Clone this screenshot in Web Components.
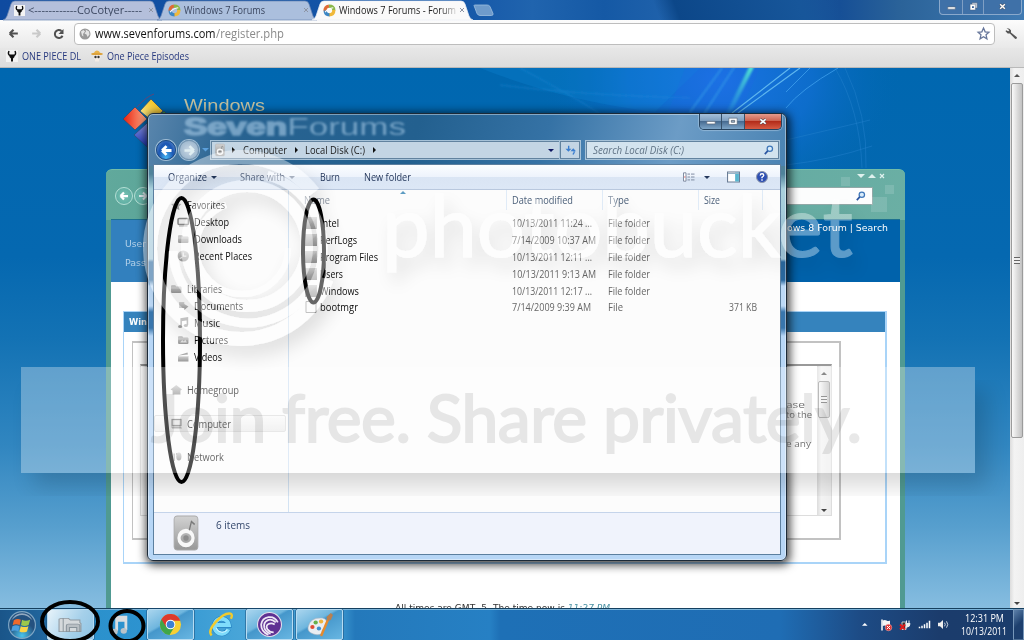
<!DOCTYPE html>
<html lang="en">
<head>
<meta charset="utf-8">
<title>Desktop</title>
<style>
  html, body { margin: 0; height: 100%; overflow: hidden; }
  body { font: 10px/1.2 "Open Sans", "Noto Sans", sans-serif; color: #1b1b1b; }
</style>
</head>
<body>
<desktop-screen></desktop-screen>

<script>
const shadow = (el, html) => {
  const template = document.createElement('template')
  template.innerHTML = html
  el.attachShadow({ mode: 'open' }).appendChild(template.content.cloneNode(true))
}

// simple elements only need a tag name and a piece of markup
const define = (name, html) => {
  customElements.define(name, class extends HTMLElement {
    constructor() {
      super()
      shadow(this, typeof html === 'function' ? html(this) : html)
    }
  })
}

const box = 'box-sizing: border-box;'

/* ---------- icons ---------- */

const arrowL = 'M5 12 L12 5 M5 12 L12 19 M5 12 H20'
const folderPath = '<path d="M2 6q0-2 2-2h6l2 3h8q2 0 2 2v9q0 2-2 2H4q-2 0-2-2z" fill="url(#g)"/><path d="M2 10h20" stroke="#eee"/>'

const icons = {
  back: `<path d="${arrowL}" fill="none" stroke="#505050" stroke-width="4"/>`,
  forward: `<path d="${arrowL}" transform="matrix(-1 0 0 1 24 0)" fill="none" stroke="#c9c9c9" stroke-width="4"/>`,
  reload: '<path d="M19 15.500A8 8 0 1 1 17 6" fill="none" stroke="#505050" stroke-width="4"/><path d="M21 2v10h-10z" fill="#505050"/>',
  backw: `<path d="${arrowL}" fill="none" stroke="#fff" stroke-width="4.500"/>`,
  fwdw: `<path d="${arrowL}" transform="matrix(-1 0 0 1 24 0)" fill="none" stroke="#e0eef2" stroke-width="4"/>`,
  whitex: '<path d="M4 4l16 16M20 4L4 20" stroke="#dff1ee" stroke-width="5"/>',
  globe: '<circle cx="12" cy="12" r="11" fill="#999"/><path d="M4 7l5-3 3 3-4 5 1 5-3-2zM13 3l7 4 1 6-4 5-2-5-4-2 3-4z" fill="#e4e4e4"/>',
  star: '<path d="M12 2l3 7 7 .7-5.300 4.800L18.300 22 12 18l-6.300 4 1.600-7.500L2 9.700 9 9z" fill="#fff" stroke="#65759a" stroke-width="2.400"/>',
  wrench: '<path d="M3 2l5 1 3 3 0 4 11 9q1 3-3 3L9 12H5L1 8l1-2 4 2 2-2z" fill="#555"/>',
  skull: '<rect width="24" height="24" fill="#f4f4f4"/><path d="M6 2q-3 7 2 9M18 2q3 7-2 9" fill="none" stroke="#111" stroke-width="3"/><path d="M7 9h10v5l-3 3v6h-4v-6l-3-3z" fill="#111"/>',
  luffy: '<ellipse cx="12" cy="8" rx="12" ry="3" fill="#dca23c"/><path d="M6 6q1-5 6-5t6 5z" fill="#e8b24a"/><path d="M5 10h14q0 8-3 9v4H8v-4q-3-1-3-9z" fill="#f3ece6"/><circle cx="9" cy="14" r="2.400" fill="#333"/><circle cx="15" cy="14" r="2.400" fill="#333"/>',
  forums: '<g fill="none" stroke-width="6"><path d="M4 13Q3 5 11 4" stroke="#e06a35"/><path d="M11 4q9 0 9 8" stroke="#8bb84a"/><path d="M20 11q0 9-9 9" stroke="#f0b93a"/><path d="M12 20q-8 0-8-8" stroke="#3c87c4"/></g><path d="M4 15q5-7 15-8" stroke="#fff" stroke-width="2" fill="none"/>',
  disk: '<rect x="1" y="0" width="22" height="24" rx="3" ry="2.300" fill="url(#g)" stroke="#aaa" stroke-width=".8"/><ellipse cx="12" cy="15.500" rx="6.500" ry="5" fill="none" stroke="#f8f8f8" stroke-width="3"/><ellipse cx="12" cy="15.500" rx="2.500" ry="2" fill="#8c8c8c"/><path d="M15 10l2-6 3 2" fill="none" stroke="#7a7a7a" stroke-width="1.200"/>',
  favorites: '<path d="M12 3l3 6 7 1-5 5 1 7-6-3-6 3 1-7-5-5 7-1z" fill="url(#g)"/>',
  desktop: '<rect x="2" y="5" width="20" height="12" rx="2" fill="#eee" stroke="#888" stroke-width="3"/><path d="M4 20h16" stroke="#aaa" stroke-width="2"/>',
  folder: folderPath,
  recent: '<circle cx="12" cy="12" r="11" fill="url(#g)"/><path d="M12 5v7h6M5 17l5-2" fill="none" stroke="#eee" stroke-width="2.500"/>',
  documents: '<path d="M4 4h10v4l8 5-8 7v-4H4z" fill="url(#g)"/>',
  music: '<path d="M8 18V4l12-2v14M8 7l12-2" fill="none" stroke="#999" stroke-width="3"/><ellipse cx="6" cy="19" rx="4" ry="3" fill="#a0a0a0"/><ellipse cx="17" cy="17" rx="4" ry="3" fill="#a0a0a0"/>',
  pictures: folderPath + '<path d="M6 17l4-5 3 3 3-4 3 6z" fill="#e2e2e2"/>',
  videos: '<path d="M2 10h20v11H2z" fill="url(#g)"/><path d="M2 9L20 3l1 4z" fill="#aaa"/><path d="M3 11h18" stroke="#eee"/>',
  home: '<path d="M12 2l11 9-3 2v8H5v-8l-4-2z" fill="url(#g)"/>',
  computer: '<rect x="4" y="3" width="17" height="12" fill="#e4e4e4" stroke="#808080" stroke-width="2.500"/><path d="M2 17h19l2 4H4z" fill="#999"/>',
  network: '<path d="M8 5v15M13 4v4" stroke="#bbb" stroke-width="3"/><ellipse cx="17" cy="11" rx="5" ry="8" fill="url(#g)"/>',
  block: '<rect x="0" y="0" width="24" height="24" fill="url(#g)"/><path d="M2 22L22 4v20z" fill="#9a9a9a" opacity=".25"/>',
  file: '<path d="M2 1h20v22H2z" fill="#fafafa" stroke="#999" stroke-width="2"/>',
  search: '<circle cx="14" cy="9" r="6.500" fill="#d8ecfb" stroke="#3e76b8" stroke-width="3"/><path d="M9 14L2 22" stroke="#2b55a0" stroke-width="4"/>',
  refresh: '<path d="M8 2v9" stroke="#3c7fd0" stroke-width="3"/><path d="M1 9h13l-6.500 7z" fill="#3c7fd0"/><path d="M17 23q4-3 3-8" fill="none" stroke="#3c7fd0" stroke-width="3"/><path d="M12 15l6-7 6 7z" fill="#3c7fd0"/>',
  view: '<g stroke="#77839a" stroke-width="2"><path d="M9 5h5M16 5h7M9 12h5M16 12h7M9 19h5M16 19h7"/><path d="M1 2h5v20H1z" fill="#fff"/></g><path d="M2 12h3" stroke="#d66" stroke-width="2"/>',
  pane: '<rect x="1" y="2" width="22" height="20" fill="#fff" stroke="#6b7d95" stroke-width="2"/><path d="M15 3h7v18h-7z" fill="#58b5cf"/><path d="M2 5h20" stroke="#98b4c8" stroke-width="2"/>',
  help: '<circle cx="12" cy="12" r="11" fill="#2d4fb3" stroke="#8e98ac" stroke-width="2"/><path d="M8.500 9q0-3.500 3.500-3.500t3.500 3q0 2-3.500 4v2M12 16.500v3" fill="none" stroke="#fff" stroke-width="2.800"/>',
  min: '<path d="M2 13h20v6H2z" fill="#fff" stroke="#5a6474" stroke-width="1.500"/>',
  max: '<path d="M2 3h20v17H2z" fill="#fff" stroke="#536070" stroke-width="1.500"/><path d="M8 9h8v5H8z" fill="#9db4cb" stroke="#536070" stroke-width="2"/>',
  restore: '<path d="M8 2h14v14H8z" fill="#c8d2e0" stroke="#44506a"/><path d="M3 6h14v15H3z" fill="#fff" stroke="#44506a"/><path d="M8 11h5v5H8z" fill="#355e98"/>',
  close: '<path d="M4 4l16 16M20 4L4 20" stroke="#49505c" stroke-width="8"/><path d="M4 4l16 16M20 4L4 20" stroke="#fff" stroke-width="5"/>',
  tabclose: '<path d="M4 4l16 16M20 4L4 20" stroke="#8d94a3" stroke-width="4"/>',
  orb: '<circle cx="12" cy="12" r="11.500" fill="url(#o)" stroke="#7fa6c4"/><path d="M5 8q3-2 6-.5l-1 4.500q-3-1.500-6 0z" fill="#ee6a2c"/><path d="M12 7.500q3 1.500 7 0l-1.300 4.500q-3.500 1.500-6.500 0z" fill="#9cc84b"/><path d="M3.800 13q3-1.500 6 0l-1 4.500q-3-1.500-6 0z" fill="#4b9fe0"/><path d="M11 13q3 1.500 6.500 0l-1.200 4.500q-3.500 1.500-6.500 0z" fill="#fbd347"/><path d="M3 8q9-9 18 0-3-6-9-6T3 8z" fill="#fff" opacity=".5"/>',
  folders: '<path d="M1 5q3-2 4 0v15H1zM5 4h5l2 2h9v3l1 1v10H5z" fill="#d5d9dc" stroke="#8e989f"/><path d="M8 20v-7q0-2 2-2h9q2 0 2 2v7h-3v-5h-7v5z" fill="#b9bfc4" stroke="#87929a"/>',
  tasknote: '<path d="M8 19V3h13v15M8 6h13" fill="none" stroke="#d9dde0" stroke-width="4"/><ellipse cx="5" cy="20" rx="4.500" ry="3.500" fill="#b9c3ca"/><ellipse cx="18" cy="19" rx="4.500" ry="3.500" fill="#b9c3ca"/>',
  chrome: '<circle cx="12" cy="12" r="11" fill="#f7cf34"/><path d="M2.500 6.500A11 11 0 0 0 11 23l5-8.500L12 12z" fill="#3fa648"/><path d="M2.500 6.500L7.500 14.500 12 8h10.300A11 11 0 0 0 2.500 6.500z" fill="#dd3a2c"/><circle cx="12" cy="12" r="5" fill="#fff"/><circle cx="12" cy="12" r="4" fill="#3c7fd2"/>',
  ie: '<g fill="none"><path d="M19.500 16.500A7 7.200 0 1 1 20 12.500H8" stroke="#2583c4" stroke-width="5"/><path d="M19.500 16.500A7 7.200 0 1 1 20 12.500H8" stroke="#7fdcfb" stroke-width="3.800"/><path d="M18.500 17A6 6 0 0 1 8 15" stroke="#d4f5ff" stroke-width="1"/><path d="M3.500 22.500q-4-4 4-13t14-8q2.500 1 .5 5" stroke="#f2cb2d" stroke-width="2.300"/></g>',
  torrent: '<circle cx="12" cy="12" r="11.500" fill="#5f3193" stroke="#e6e2ee"/><g fill="none" stroke="#efe8f6" stroke-width="1.700"><path d="M20 10Q17 4 11 5T4 12q0 7 7 10"/><path d="M18 10q-4-4-8-2t-3 7q1 4 6 6"/><path d="M17 12q-3-2-6-.5t-1 5q2 3 6 3"/></g>',
  paint: '<path d="M1 14Q3 4 14 5q5 1 4 6t-3 5q-2 2-1 4-3 3-8 1-6-2-5-7z" fill="#e9edf2" stroke="#aab3bf" stroke-width=".6"/><circle cx="5" cy="14" r="2" fill="#df4b35"/><circle cx="8" cy="9.500" r="2" fill="#67b04b"/><circle cx="13" cy="8.500" r="2" fill="#eeb33a"/><circle cx="11" cy="15.500" r="2" fill="#3f8fce"/><path d="M20 5l-7 18" stroke="#e58a2c" stroke-width="2.200"/><path d="M18 4l4-4 2 2-2 5-3 1z" fill="#b98050"/>',
  flag: '<path d="M4 1v22" stroke="#fff" stroke-width="3"/><path d="M5 3q5-2 8 0t7 0v11q-4 2-7 0t-8 0z" fill="#f5f5f5"/><circle cx="17" cy="17" r="6.500" fill="#d33" stroke="#fbb"/><path d="M14 14l6 6M20 14l-6 6" stroke="#fff" stroke-width="2"/>',
  power: '<path d="M6 6h8v15H6z" fill="#333" stroke="#eee" stroke-width="1.500"/><path d="M13 9h9q0 7-6 7-2 0-3 4M15 9V3M20 9V3" fill="#eee" stroke="#eee" stroke-width="2"/><path d="M2 11l10 10M12 11L2 21" stroke="#e01b1b" stroke-width="4"/>',
  signal: '<path d="M3 18v4M8 15v7M13 11v11M18 7v15M23 2v20" stroke="#fff" stroke-width="3"/>',
  speaker: '<path d="M2 8h4l6-6v20l-6-6H2z" fill="#eee"/><path d="M15 8q3 4 0 8M19 5q5 7 0 14" fill="none" stroke="#e5eaf0" stroke-width="1.800"/>'
}

class GlyphIcon extends HTMLElement {
  constructor() {
    super()
    const w = this.getAttribute('w') || 12
    const h = this.getAttribute('h') || w
    shadow(this, `
      <style>
        :host { display: inline-block; flex: none; width: ${w}px; height: ${h}px; }
        svg { display: block; overflow: visible; }
      </style>
      <svg width="${w}" height="${h}" viewBox="0 0 24 24" preserveAspectRatio="none">
        <defs>
          <linearGradient id="g" x2="0" y2="1"><stop stop-color="#d2d2d2"/><stop offset="1" stop-color="#989898"/></linearGradient>
          <radialGradient id="o" cy=".9"><stop stop-color="#49c4ec"/><stop offset="1" stop-color="#24517f"/></radialGradient>
        </defs>
        ${icons[this.getAttribute('name')]}
      </svg>
    `)
  }
}
customElements.define('glyph-icon', GlyphIcon)

// small triangle, direction and size by attribute
define('tri-mark', el => {
  const s = +(el.getAttribute('s') || 3)
  const c = el.getAttribute('c') || '#111'
  const pts = {
    down: `0,0 ${s * 2},0 ${s},${s}`,
    up: `0,${s} ${s * 2},${s} ${s},0`,
    right: `0,0 ${s},${s} 0,${s * 2}`
  }[el.getAttribute('dir') || 'down']
  const right = el.getAttribute('dir') === 'right'
  const w = right ? s : s * 2
  const h = right ? s * 2 : s
  return `<style>:host { display: block; flex: none; width: ${w}px; height: ${h}px; } svg { display: block; }</style>
    <svg width="${w}" height="${h}"><polygon points="${pts}" fill="${c}"/></svg>`
})

/* ---------- browser ---------- */

define('browser-tab', el => {
  const w = +el.getAttribute('w')
  const active = el.hasAttribute('active')
  return `
  <style>
    :host { display: block; position: relative; flex: none; width: ${w}px; height: 20px; margin-right: -${active ? 0 : 5}px; ${active ? 'z-index: 1;' : ''} }
    svg { display: block; position: absolute; inset: 0; overflow: visible; }
    .row { ${box} position: relative; display: flex; align-items: center; height: 20px; padding: 0 8px 0 11px; color: ${active ? '#222' : '#3b4760'}; }
    .text { flex: 1; overflow: hidden; padding-left: 3px; white-space: nowrap; }
    :host([fade]) .text { -webkit-mask-image: linear-gradient(90deg, #000 85%, transparent); }
  </style>
  <svg width="${w}" height="20"><path d="M0 20Q3 19 4 16L8 4Q9 1 12 1H${w - 12}Q${w - 9} 1 ${w - 8} 4L${w - 4} 16Q${w - 3} 19 ${w} 20z"
    fill="${active ? '#fafafa' : (el.getAttribute('tint') || '#abbfdd')}" stroke="${active ? '#e9eef5' : '#6b87b3'}" stroke-width=".7"/></svg>
  <div class="row"><slot name="icon"></slot><div class="text"><slot></slot></div><glyph-icon name="tabclose" w="6"></glyph-icon></div>`
})

define('browser-tabs', `
  <style>
    :host { ${box} display: flex; height: 20px; padding-left: 3px; border-bottom: 0;
      background: linear-gradient(70deg, transparent 64%, #0c4789 66%, #17569a 78%, transparent 82%), linear-gradient(90deg, #0f4ba0, #1557a8 45%, #2064ae 52%, #1559a5 59%, #2163ac 66%, #164f96 82%, #2b6399 88%, #417bb3); }
    .new { width: 21px; height: 14px; margin: 4px 0 0 0; }
    .wins { ${box} display: flex; margin: 0 2px 5px auto; border: 1px solid #8aa9cc; border-top: 0; border-radius: 0 0 4px 4px; background: #3f71a8; overflow: hidden; height: 15px; }
    .wins div { ${box} display: grid; place-items: center; width: 23px; padding-bottom: 1px; border-right: 1px solid #7f9fc4; }
    .wins div:nth-child(2) { width: 21px; }
    .wins div:last-child { width: 37px; border: 0; }
  </style>
  <browser-tab w="159" tint="#b4bfdb"><glyph-icon slot="icon" name="skull" w="11"></glyph-icon><fit-text w="114">&lt;------------CoCotyer-----</fit-text></browser-tab>
  <browser-tab w="160"><glyph-icon slot="icon" name="forums" w="13"></glyph-icon><fit-text w="81">Windows 7 Forums</fit-text></browser-tab>
  <browser-tab w="161" active fade><glyph-icon slot="icon" name="forums" w="13"></glyph-icon><fit-text w="117">Windows 7 Forums - Forum</fit-text></browser-tab>
  <svg class="new"><path d="M1 1.500q0-.5 1-.5h12q2 0 3 1.500l3 7q.5 2-1.500 2H7q-2 0-3-2z" fill="#6f9bcb" stroke="#a0bfde" stroke-width=".8"/></svg>
  <div class="wins"><div><glyph-icon name="min" w="9"></glyph-icon></div><div><glyph-icon name="restore" w="9"></glyph-icon></div><div><glyph-icon name="close" w="7"></glyph-icon></div></div>
`)

define('browser-toolbar', `
  <style>
    :host { ${box} display: flex; align-items: center; gap: 10px; height: 28px; padding: 0 6px 1px 7px; background: linear-gradient(#fcfcfc, #e9e9e9); }
    .url { ${box} flex: 1; display: flex; align-items: center; height: 22px; margin-left: -1px; padding: 0 4px; border: 1px solid #bdbdbd; border-radius: 4px; background: #fff; font-size: 13px; color: #111; }
    .url glyph-icon:first-child { margin-right: 4px; }
    .path { color: #8a8a8a; flex: 1; }
  </style>
  <glyph-icon name="back" w="13"></glyph-icon>
  <glyph-icon name="forward" w="13"></glyph-icon>
  <glyph-icon name="reload" w="12"></glyph-icon>
  <div class="url">
    <glyph-icon name="globe" w="12"></glyph-icon><fit-text w="120.500">www.sevenforums.com</fit-text><span class="path"><fit-text w="68">/register.php</fit-text></span>
    <glyph-icon name="star" w="13"></glyph-icon>
  </div>
  <glyph-icon name="wrench" w="13"></glyph-icon>
`)

define('bookmarks-bar', `
  <style>
    :host { ${box} display: flex; align-items: center; height: 20px; padding: 0 6px 4px; border-bottom: 1px solid #b9b9b9; background: linear-gradient(#e7e7e7, #dcdcdc); color: #26387e; }
    glyph-icon { margin-right: 4px; }
    fit-text { margin-right: 10px; }
  </style>
  <glyph-icon name="skull" w="12"></glyph-icon><fit-text w="59">ONE PIECE DL</fit-text>
  <glyph-icon name="luffy" w="12"></glyph-icon><fit-text w="82">One Piece Episodes</fit-text>
`)

define('scroll-bar', el => `
  <style>
    :host { ${box} display: flex; flex-direction: column; align-items: center; flex: none; width: 14px; padding: 6px 0 3px; background: linear-gradient(90deg, #dcdcdc, #f3f3f3 30%, #eee); }
    .thumb { ${box} display: grid; place-items: center; width: 12px; height: ${el.getAttribute('thumb')}px; margin: 6px 0 auto; border: 1px solid #9b9b9b; border-radius: 2px; background: linear-gradient(90deg, #fafafa, #dadada 55%, #c2c2c2); }
    .grip { width: 6px; height: 7px; background: repeating-linear-gradient(#666 0 1px, #eee 1px 3px); }
  </style>
  <tri-mark dir="up" s="3" c="#555"></tri-mark>
  <div class="thumb"><div class="grip"></div></div>
  <tri-mark s="3" c="#444"></tri-mark>
`)

/* ---------- forum page ---------- */

define('page-backdrop', `
  <style>:host { display: block; position: absolute; inset: 0; } svg { display: block; }</style>
  <svg width="1010" height="540" viewBox="0 68 1010 540">
    <defs>
      <linearGradient id="sky" x2="0" y2="1"><stop stop-color="#0067b0"/><stop offset=".35" stop-color="#0568b0"/><stop offset=".5" stop-color="#1372b4"/><stop offset=".7" stop-color="#3186c0"/><stop offset=".85" stop-color="#579fce"/><stop offset="1" stop-color="#86bde0"/></linearGradient>
      <radialGradient id="glow"><stop stop-color="#1b73e4"/><stop offset=".5" stop-color="#0f6ed0" stop-opacity=".85"/><stop offset="1" stop-color="#0067b0" stop-opacity="0"/></radialGradient>
      <linearGradient id="ray" x1="1" x2="0" y2="1"><stop stop-color="#54e8d2"/><stop offset="1" stop-color="#2d9ce0" stop-opacity=".3"/></linearGradient>
      <filter id="soft"><feGaussianBlur stdDeviation="1"/></filter>
    </defs>
    <rect y="68" width="1010" height="540" fill="url(#sky)"/>
    <ellipse cx="720" cy="80" rx="185" ry="140" fill="url(#glow)"/>
    <path d="M480 68Q560 100 655 112L700 68z" fill="#0e8adb" opacity=".25"/>
    <path d="M685 68L668 112H740L760 68z" fill="#2263e4" opacity=".2"/>
    <g filter="url(#soft)" fill="none">
      <path d="M752 66L728 114" stroke="url(#ray)" stroke-width="4.500"/>
      <path d="M735 66L704 114M722 68L690 112" stroke="#2f91e6" stroke-width="1.500"/>
      <path d="M520 68Q580 100 600 114M500 85Q580 95 690 98" stroke="#2791e0" opacity=".5"/>
    </g>
    <g fill="none">
      <path d="M790 68L732 113M800 68L738 113" stroke="#5eb6ef" stroke-width="1.200"/>
      <path d="M810 68L786 92M838 68Q800 90 786 108" stroke="#3fa0ec" stroke-width=".8"/>
      <path d="M835 68Q860 110 862 168M845 68Q868 115 866 168M786 140Q850 125 870 120M786 165Q830 160 872 146" stroke="#2180cc" stroke-width="1" opacity=".5"/>
    </g>
    <defs>
      <linearGradient id="yl" x1="1" x2="0" y2="1"><stop stop-color="#f2b800"/><stop offset="1" stop-color="#fff0a0"/></linearGradient>
      <linearGradient id="rd"><stop stop-color="#e8200e"/><stop offset="1" stop-color="#ffb08a"/></linearGradient>
      <linearGradient id="bl" x2="0" y2="1"><stop stop-color="#8d95e0"/><stop offset="1" stop-color="#1c35b8"/></linearGradient>
    </defs>
    <g transform="translate(151 111)" stroke="#2b4e78" stroke-width=".8">
      <path d="M0-12L12 0 1 10-11 0z" fill="url(#yl)"/><path d="M-16-4L-4 8-16 19-28 8z" fill="url(#rd)"/><path d="M-4 12L8 24-4 36-17 24z" fill="url(#bl)"/><path d="M1 10L13 0 24 11 12 22z" fill="#3f9c49"/>
      <path d="M-14-4Q-4-15 3-17" fill="none" stroke="#733f6a"/>
    </g>
  </svg>
`)

define('forum-terms', `
  <style>
    :host { ${box} display: flex; justify-content: flex-end; height: 199px; margin: 9px 44px 0 8px; padding: 21px 7px 22px; border: 2px solid #c2c2c2; border-left-width: 1px; }
    .scroll { ${box} display: flex; width: 100%; border: 1px solid #ddd; border-top: 2px solid #999; }
    .lines { flex: 1; display: flex; flex-direction: column; align-items: flex-start; padding: 34px 0 0 645px; font-size: 9.500px; line-height: 10px; color: #333; }
    .lines :last-child { margin-top: 19px; }
  </style>
  <div class="scroll">
    <div class="lines"><fit-text w="19">ase</fit-text><fit-text w="26">to the</fit-text><fit-text w="25">e any</fit-text></div>
    <scroll-bar thumb="37"></scroll-bar>
  </div>
`)

define('forum-frame', `
  <style>
    :host { ${box} display: flex; flex-direction: column; width: 799px; height: 440px; padding: 0 5px; border-radius: 6px 6px 0 0; background: linear-gradient(115deg, #61a99c, #56a195 20%, #62aaa2 70%, #6bafa4) 0 0 / 100% 50px no-repeat, #509a92; border-top: 1px solid #72bda9; }
    .head { ${box} display: flex; justify-content: space-between; height: 49px; padding: 1px 27px 0 4px; }
    .nav { display: flex; align-self: center; gap: 1px; padding-top: 1px; }
    .nav div { ${box} display: grid; place-items: center; width: 18px; height: 18px; border: 1px solid #b6e0d6; border-radius: 50%; background: radial-gradient(#7ac3b5, #56a79c); }
    .tools { display: flex; flex-direction: column; align-items: flex-end; }
    .marks { display: flex; align-items: center; gap: 3px; height: 9px; margin-right: -12px; color: #dff1ee; }
    .find { ${box} display: flex; justify-content: flex-end; align-items: center; width: 92px; height: 18px; margin-top: 7px; padding-right: 6px; background: #fcfdfd; border: 1px solid #91a8a7; }
    .login { ${box} display: flex; justify-content: space-between; height: 63px; padding: 3px 12px 0 14px; border-top: 1px solid #1d7190; background: linear-gradient(90deg, #3280be, #3280be 5%, #0062ab 20%); color: #b3d0e9; }
    .fields { display: flex; flex-direction: column; gap: 8px; padding-top: 16px; font-family: "DejaVu Sans", sans-serif; font-size: 9px; }
    .links { color: #fff; font-family: "DejaVu Sans", sans-serif; font-size: 9px; }
    .main { flex: 1; display: flex; flex-direction: column; padding: 29px 13px 0 12px; background: #fff; overflow: hidden; }
    .panel { ${box} flex: none; height: 253px; border: 1px solid #a9d4f8; border-width: 1px 2px 2px 1px; }
    .title { ${box} display: flex; align-items: center; height: 20px; padding-left: 5px; background: #3583bd; color: #fff; font-family: "DejaVu Sans", sans-serif; font-weight: bold; font-size: 9px; }
    .time { flex: none; text-align: center; margin: 39px 0 0 -3px; font: 9px/11px "DejaVu Sans", sans-serif; color: #333; white-space: nowrap; }
    .time i { color: #4d93a5; }
  </style>
  <div class="head">
    <div class="nav"><div><glyph-icon name="backw" w="12"></glyph-icon></div><div><glyph-icon name="fwdw" w="12"></glyph-icon></div></div>
    <div class="tools">
      <div class="marks"><tri-mark s="4" c="#dff1ee"></tri-mark><tri-mark dir="up" s="4" c="#dff1ee"></tri-mark><glyph-icon name="whitex" w="6"></glyph-icon></div>
      <div class="find"><glyph-icon name="search" w="10"></glyph-icon></div>
    </div>
  </div>
  <div class="login">
    <div class="fields"><fit-text w="21">User</fit-text><fit-text w="21">Pass</fit-text></div>
    <div class="links"><fit-text w="101">ows 8 Forum | Search</fit-text></div>
  </div>
  <div class="main">
    <div class="panel"><div class="title"><fit-text w="18">Win</fit-text></div><forum-terms></forum-terms></div>
    <div class="time"><fit-text w="218">All times are GMT -5. The time now is <i>11:27 PM</i>.</fit-text></div>
  </div>
`)

define('forum-page', `
  <style>
    :host { display: flex; height: 540px; overflow: hidden; }
    .view { position: relative; flex: 1; overflow: hidden; }
    .content { position: relative; display: flex; flex-direction: column; padding-left: 106px; }
    .brand { ${box} height: 101px; padding: 28px 0 0 78px; color: #c0bf9f; font: 17px/20px "Liberation Sans", Arial, sans-serif; }
  </style>
  <div class="view">
    <page-backdrop></page-backdrop>
    <div class="content">
      <div class="brand"><fit-text w="81">Windows</fit-text></div>
      <forum-frame></forum-frame>
    </div>
  </div>
  <scroll-bar thumb="355"></scroll-bar>
`)

/* ---------- explorer ---------- */

define('window-buttons', `
  <style>
    :host { ${box} display: flex; width: 83px; height: 16px; border: 1px solid #26435f; border-top: 0; border-radius: 0 0 5px 5px; overflow: hidden; box-shadow: 0 0 1px 1px #b8d3e980; }
    div { ${box} display: grid; place-items: center; width: 23px; padding-bottom: 1px; border-right: 1px solid #35506a; background: linear-gradient(#a4bfda, #7e9fc0 45%, #45698f 48%, #7da5c8); }
    div:nth-child(2) { width: 22px; }
    div:last-child { flex: 1; border: 0; background: linear-gradient(#e49a8c, #cc6351 45%, #b22a18 48%, #d65b43); }
  </style>
  <div><glyph-icon name="min" w="10"></glyph-icon></div><div><glyph-icon name="max" w="10" h="9"></glyph-icon></div><div><glyph-icon name="close" w="8" h="7"></glyph-icon></div>
`)

define('address-bar', `
  <style>
    :host { display: flex; align-items: center; height: 18px; padding: 0 2px 0 3px; }
    .nav { display: flex; align-items: center; }
    .ball { ${box} display: grid; place-items: center; width: 20px; height: 20px; border: 1px solid #1b4a86; border-radius: 50%; background: radial-gradient(at 50% 100%, #46b7f5, #1c56b2 60%, #6d9ad3); box-shadow: 0 0 0 1px #9fbcd4; }
    .off { margin-left: 3px; border-color: #7b99b3; background: radial-gradient(#c9d7e4, #8fadc7); }
    .box { ${box} display: flex; align-items: center; height: 18px; border: 1px solid #62839f; background: #c3d5e4; box-shadow: 0 0 0 1px #a6c2d8; }
    .crumbs { width: 350px; margin-left: 2px; padding-left: 3px; }
    .crumbs > * { flex: none; }
    .go { width: 20px; justify-content: center; }
    .find { width: 193px; margin-left: 6px; padding: 0 4px 0 6px; justify-content: space-between; background: #d3e3ee; color: #5f7284; font-style: italic; }
  </style>
  <div class="nav"><div class="ball"><glyph-icon name="backw" w="15"></glyph-icon></div><div class="ball off"><glyph-icon name="fwdw" w="15"></glyph-icon></div>
  <tri-mark s="3.500" c="#5ba0dc" style="margin: 0 0 0 3px"></tri-mark></div>
  <div class="box crumbs">
    <glyph-icon name="disk" w="10" h="12"></glyph-icon>
    <tri-mark dir="right" style="margin: 0 8px 0 7px"></tri-mark><fit-text w="44">Computer</fit-text>
    <tri-mark dir="right" style="margin: 0 7px 0 8px"></tri-mark><fit-text w="60">Local Disk (C:)</fit-text>
    <tri-mark dir="right" style="margin: 0 auto 0 8px"></tri-mark><tri-mark c="#0d1560" style="margin-right: 5px"></tri-mark>
  </div>
  <div class="box go"><glyph-icon name="refresh" w="11" h="10"></glyph-icon></div>
  <div class="box find"><fit-text w="91">Search Local Disk (C:)</fit-text><glyph-icon name="search" w="10"></glyph-icon></div>
`)

define('command-bar', `
  <style>
    :host { ${box} display: flex; align-items: center; height: 25px; padding: 0 12px 0 14px; border-bottom: 1px solid #b9c8de; background: linear-gradient(#fbfdff, #edf3fc 50%, #dae5f4 52%, #dce7f6); color: #25385c; }
    tri-mark { margin-left: 4px; }
    .dim { color: #5c6b86; }
  </style>
  <fit-text w="39">Organize</fit-text><tri-mark c="#25385c"></tri-mark>
  <fit-text class="dim" w="45" style="margin-left: 23px">Share with</fit-text><tri-mark c="#6f7d96"></tri-mark>
  <fit-text w="20" style="margin-left: 25px">Burn</fit-text>
  <fit-text w="47" style="margin: 0 auto 0 24px">New folder</fit-text>
  <glyph-icon name="view" w="12" h="10"></glyph-icon><tri-mark c="#25385c" style="margin: 0 17px 0 9px"></tri-mark>
  <glyph-icon name="pane" w="13" h="12"></glyph-icon><glyph-icon name="help" w="12" style="margin-left: 16px"></glyph-icon>
`)

define('tree-item', el => `
  <style>
    :host { ${box} display: flex; align-items: center; height: 16.800px; padding-left: 16px; color: #222; }
    :host([sub]) { padding-left: 23px; color: #0c0c0c; }
    :host([sub]) glyph-icon { margin-right: 4.500px; }
    :host([gap]) { margin-top: 16.800px; }
    :host([selected]) { margin-right: 2px; border: 1px solid #dedede; border-radius: 2px; padding-left: 15px; background: linear-gradient(#fafafa, #ececec); }
    glyph-icon { margin-right: 4px; }
  </style>
  <glyph-icon name="${el.getAttribute('icon')}" w="12.500" h="12"></glyph-icon><slot></slot>
`)

define('nav-tree', `
  <style>:host { ${box} display: block; flex: none; width: 135px; padding-top: 7px; border-right: 1px solid #d3e3f3; }</style>
  <tree-item icon="favorites"><fit-text w="38">Favorites</fit-text></tree-item>
  <tree-item sub icon="desktop"><fit-text w="35">Desktop</fit-text></tree-item>
  <tree-item sub icon="folder"><fit-text w="48">Downloads</fit-text></tree-item>
  <tree-item sub icon="recent"><fit-text w="58">Recent Places</fit-text></tree-item>
  <tree-item gap icon="folder"><fit-text w="35">Libraries</fit-text></tree-item>
  <tree-item sub icon="documents"><fit-text w="49">Documents</fit-text></tree-item>
  <tree-item sub icon="music"><fit-text w="26">Music</fit-text></tree-item>
  <tree-item sub icon="pictures"><fit-text w="34">Pictures</fit-text></tree-item>
  <tree-item sub icon="videos"><fit-text w="28">Videos</fit-text></tree-item>
  <tree-item gap icon="home"><fit-text w="52">Homegroup</fit-text></tree-item>
  <tree-item gap selected icon="computer"><fit-text w="44">Computer</fit-text></tree-item>
  <tree-item gap icon="network"><fit-text w="37">Network</fit-text></tree-item>
`)

const files = [
  ['Intel', 19, '10/13/2011 11:24 ...', 80, 'File folder', 42],
  ['PerfLogs', 37, '7/14/2009 10:37 AM', 84, 'File folder', 42],
  ['Program Files', 58, '10/13/2011 12:11 ...', 80, 'File folder', 42],
  ['Users', 23, '10/13/2011 9:13 AM', 84, 'File folder', 42],
  ['Windows', 39, '10/13/2011 12:17 ...', 80, 'File folder', 42],
  ['bootmgr', 38, '7/14/2009 9:39 AM', 79, 'File', 15, '371 KB']
]

define('file-list', () => `
  <style>
    :host { display: block; flex: 1; }
    .row { display: grid; grid-template-columns: 218px 96px 96px 64px; align-items: center; height: 16.800px; color: #666; }
    .head { height: 20px; margin-bottom: 5px; color: #4c607a; }
    .head > div { ${box} height: 100%; padding: 4px 0 0 5px; border-right: 1px solid #e0ebf7; }
    .head > div:first-child { padding-left: 15px; color: #8a93a0; display: flex; align-items: start; }
    .head tri-mark { margin: -3px 0 0 70px; }
    .name { display: flex; align-items: center; gap: 3px; padding-left: 16px; color: #0c0c0c; }
    .cell { padding-left: 4.500px; }
    .size { text-align: right; padding-right: 6px; }
  </style>
  <div class="row head"><div><fit-text w="26">Name</fit-text><tri-mark dir="up" c="#5d9cc2"></tri-mark></div><div><fit-text w="61">Date modified</fit-text></div><div><fit-text w="21">Type</fit-text></div><div><fit-text w="16">Size</fit-text></div></div>
  ${files.map(([name, nw, date, dw, type, tw, size]) => `
    <div class="row">
      <div class="name"><glyph-icon name="${size ? 'file' : 'block'}" w="12"></glyph-icon><fit-text w="${nw}">${name}</fit-text></div>
      <div class="cell"><fit-text w="${dw}">${date}</fit-text></div>
      <div class="cell"><fit-text w="${tw}">${type}</fit-text></div>
      <div class="size">${size ? `<fit-text w="28">${size}</fit-text>` : ''}</div>
    </div>`).join('')}
`)

define('explorer-window', `
  <style>
    :host { ${box} display: flex; flex-direction: column; width: 640px; height: 448px; padding: 0 5px 5px; border: 1px solid #1c2a38; border-radius: 6px; overflow: hidden; box-shadow: inset 0 0 0 1px #ffffff66;
      background: linear-gradient(105deg, #5a86ad, #286391 14%, #23608f 42%, #3572a5 62%, #6c9cc6 82%, #4a83b3) 0 0 / 100% 52px no-repeat,
        linear-gradient(#4f829a 60px, #a9d0dc 75px, #9ec4d8 145px, #2a689e 148px, #2a689e 166px, #bcd9f6 172px, #bcd9f6 192px, #3976ad 198px, #3976ad 214px, #b7d6f6 222px);
      }
    .caption { display: flex; justify-content: space-between; height: 27px; }
    .caption window-buttons { margin-right: -1px; }
    .ghost { padding: 1px 0 0 31px; font: 23px/25px "Liberation Sans", Arial, sans-serif; color: #a8cbe6; filter: blur(1.300px); opacity: .6; }
    .ghost b { -webkit-text-stroke: 1.500px #a8cbe6; }
    .body { flex: 1; display: flex; flex-direction: column; margin-top: 5px; border: 1px solid #5c7f9f; background: #fcfcfc; }
    .split { flex: 1; display: flex; }
    .status { ${box} display: flex; align-items: flex-start; height: 42px; padding: 3px 19px; border-top: 1px solid #c5d4ea; background: #f0f3fc; color: #33476b; }
    .status fit-text { margin: 3px 0 0 17px; }
  </style>
  <div class="caption"><div class="ghost"><fit-text w="222"><b>Seven</b>Forums</fit-text></div><window-buttons></window-buttons></div>
  <address-bar></address-bar>
  <div class="body">
    <command-bar></command-bar>
    <div class="split"><nav-tree></nav-tree><file-list></file-list></div>
    <div class="status"><glyph-icon name="disk" w="26" h="34"></glyph-icon><fit-text w="34">6 items</fit-text></div>
  </div>
`)

/* ---------- taskbar ---------- */

define('task-button', el => `
  <style>
    :host { ${box} display: grid; place-items: center; flex: none; width: ${el.getAttribute('w')}px; height: 31px; }
    :host([open]) { border: 1px solid #b7dcf2; border-radius: 2px; background: linear-gradient(150deg, #a9d5ee, #6fb6de 40%, #4597cb 45%, #68b6e2); box-shadow: 0 0 0 .5px #1a4d78; }
    :host([lit]) { background: linear-gradient(120deg, #e7f3fa, #a5d0ea 60%, #8fc4e4); }
  </style><slot></slot>`)

define('task-bar', `
  <style>
    :host { ${box} display: flex; align-items: center; height: 32px; border-top: 1px solid #15405f; box-shadow: inset 0 1px #7ab4da;
      background: linear-gradient(90deg, #1a5589, #20649b 40px, #2b91cc 95px, #2d93d0 145px, #48a5d8 240px, #3b97d0 340px, #2479bb 355px, #2680c4 490px, #1e70b6 500px, #1f6db4 780px, #1d4b85 860px, #1b3c6c 940px, #1b3d6c); }
    task-button { margin-right: 3px; }
    .tray { display: flex; align-items: center; gap: 7px; margin-left: auto; }
    .clock { display: flex; flex-direction: column; align-items: center; gap: 1px; line-height: 12px; color: #fff; margin: 0 -2px 0 5px; }
    .peek { ${box} width: 11px; height: 31px; margin-left: 1px; border: 1px solid #7797b9; border-bottom-color: #4b6c92; background: linear-gradient(135deg, #5d81aa, #1d3f6e 50%); }
  </style>
  <task-button w="44" style="margin-right: 3px"><glyph-icon name="orb" w="28"></glyph-icon></task-button>
  <task-button w="47" open lit><glyph-icon name="folders" w="25" h="20"></glyph-icon></task-button>
  <task-button w="47"><glyph-icon name="tasknote" w="17" h="20" style="margin-right: 2px"></glyph-icon></task-button>
  <task-button w="47" open><glyph-icon name="chrome" w="23"></glyph-icon></task-button>
  <task-button w="46"><glyph-icon name="ie" w="25"></glyph-icon></task-button>
  <task-button w="47" open><glyph-icon name="torrent" w="25"></glyph-icon></task-button>
  <task-button w="47" open><glyph-icon name="paint" w="26" h="24"></glyph-icon></task-button>
  <div class="tray">
    <tri-mark dir="up" c="#fff" s="2.800" style="margin-right: 5px"></tri-mark>
    <glyph-icon name="flag" w="12"></glyph-icon><glyph-icon name="power" w="12"></glyph-icon><glyph-icon name="signal" w="12" h="9"></glyph-icon><glyph-icon name="speaker" w="12" h="11"></glyph-icon>
    <div class="clock"><fit-text w="39">12:31 PM</fit-text><fit-text w="46">10/13/2011</fit-text></div>
    <div class="peek"></div>
  </div>
`)

/* ---------- overlays ---------- */

define('pen-marks', `
  <style>:host { display: block; } svg { display: block; }</style>
  <svg width="1024" height="640" fill="none" stroke="#000" stroke-width="4">
    <ellipse cx="181.500" cy="340" rx="18.500" ry="142"/>
    <ellipse cx="313.500" cy="251" rx="10.500" ry="51.500"/>
    <ellipse cx="70" cy="621.500" rx="28" ry="19.500"/>
    <ellipse cx="127" cy="626" rx="16.500" ry="15"/>
  </svg>
`)

define('water-mark', `
  <style>
    :host { display: block; }
    svg { display: block; font-family: Lato, sans-serif; }
  </style>
  <svg width="1024" height="640">
    <defs>
      <filter id="shade" x="-20%" y="-30%" width="140%" height="180%"><feGaussianBlur stdDeviation="11"/></filter>
      <filter id="cast" x="-20%" y="-50%" width="140%" height="220%"><feDropShadow dx="6" dy="10" stdDeviation="9" flood-color="#000" flood-opacity=".3"/></filter>
      <filter id="edge"><feGaussianBlur stdDeviation=".5"/></filter>
      <mask id="outside"><rect width="1024" height="640" fill="#fff"/><rect x="21" y="367" width="954" height="106" fill="#000"/></mask>
    </defs>
    <g mask="url(#outside)"><rect x="33" y="390" width="954" height="96" fill="#000" opacity=".15" filter="url(#shade)"/></g>
    <rect x="21" y="367" width="954" height="106" fill="#fff" opacity=".31"/>
    <g fill="none" stroke="#fff" opacity=".4" filter="url(#cast)">
      <circle cx="241" cy="248" r="91" stroke-width="14" stroke-dasharray="480 92" transform="rotate(20 241 248)"/>
      <circle cx="248" cy="248" r="75" stroke-width="9" stroke-dasharray="330 141" transform="rotate(-75 248 248)"/>
      <circle cx="247" cy="246" r="60" stroke-width="12"/>
      <circle cx="242" cy="248" r="46" stroke-width="6" stroke-dasharray="200 89"/>
    </g>
    <text x="382" y="257" font-size="85" textLength="471" lengthAdjust="spacing" fill="#fff" stroke="#fff" opacity=".36" filter="url(#cast)">photobucket</text>
    <text x="151" y="442" font-size="66" textLength="711" lengthAdjust="spacing" fill="#000" stroke="#000" stroke-width="2" opacity=".085" filter="url(#edge)">Join free. Share privately.</text>
    <g fill="#fff" opacity=".13"><rect x="871" y="197" width="16" height="15"/><rect x="885" y="185" width="9" height="9"/><rect x="841" y="177" width="9" height="9"/></g>
  </svg>
`)

define('desktop-screen', `
  <style>
    :host { display: flex; flex-direction: column; position: relative; width: 1024px; height: 640px; overflow: hidden; }
    explorer-window { position: absolute; left: 147px; top: 113px; }
    .drop { position: absolute; left: 147px; top: 113px; width: 640px; height: 448px; border-radius: 6px; box-shadow: 1px 2px 10px 2px #000b; }
    pen-marks, water-mark { position: absolute; inset: 0; }
  </style>
  <browser-tabs></browser-tabs>
  <browser-toolbar></browser-toolbar>
  <bookmarks-bar></bookmarks-bar>
  <forum-page></forum-page>
  <task-bar></task-bar>
  <div class="drop"></div>
  <explorer-window></explorer-window>
  <pen-marks></pen-marks>
  <water-mark></water-mark>
`)

// stretches its text to the given width; defined last, when everything around it has a box
customElements.define('fit-text', class extends HTMLElement {
  constructor() {
    super()
    shadow(this, `
      <style>
        :host { display: inline-block; flex: none; white-space: nowrap; text-align: left; }
        span { display: inline-block; transform-origin: 0 50%; }
      </style>
      <span><slot></slot></span>
    `)
  }

  connectedCallback() {
    const w = +this.getAttribute('w')
    const span = this.shadowRoot.querySelector('span')
    span.style.transform = `scaleX(${w / span.getBoundingClientRect().width})`
    this.style.width = w + 'px'
  }
})
</script>
</body>
</html>
